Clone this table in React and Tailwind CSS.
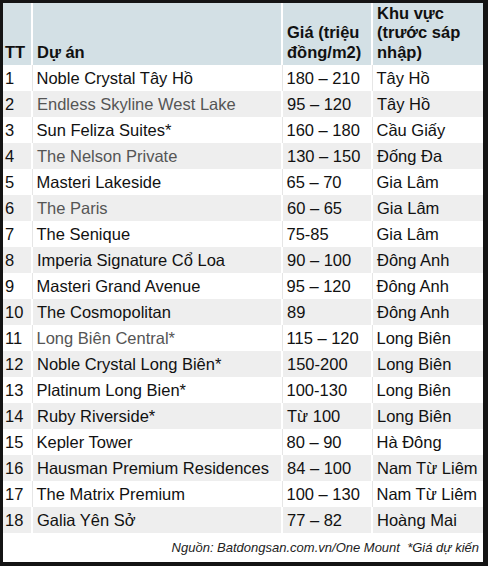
const rows = [
  ["1", "Noble Crystal Tây Hồ", "180 – 210", "Tây Hồ", false],
  ["2", "Endless Skyline West Lake", "95 – 120", "Tây Hồ", true],
  ["3", "Sun Feliza Suites*", "160 – 180", "Cầu Giấy", false],
  ["4", "The Nelson Private", "130 – 150", "Đống Đa", true],
  ["5", "Masteri Lakeside", "65 – 70", "Gia Lâm", false],
  ["6", "The Paris", "60 – 65", "Gia Lâm", true],
  ["7", "The Senique", "75-85", "Gia Lâm", false],
  ["8", "Imperia Signature Cổ Loa", "90 – 100", "Đông Anh", false],
  ["9", "Masteri Grand Avenue", "95 – 120", "Đông Anh", false],
  ["10", "The Cosmopolitan", "89", "Đông Anh", false],
  ["11", "Long Biên Central*", "115 – 120", "Long Biên", true],
  ["12", "Noble Crystal Long Biên*", "150-200", "Long Biên", false],
  ["13", "Platinum Long Bien*", "100-130", "Long Biên", false],
  ["14", "Ruby Riverside*", "Từ 100", "Long Biên", false],
  ["15", "Kepler Tower", "80 – 90", "Hà Đông", false],
  ["16", "Hausman Premium Residences", "84 – 100", "Nam Từ Liêm", false],
  ["17", "The Matrix Premium", "100 – 130", "Nam Từ Liêm", false],
  ["18", "Galia Yên Sở", "77 – 82", "Hoàng Mai", false],
];

export default function App() {
  return (
    <div className="w-[488px] h-[566px] bg-[#141414] pl-[3px] pt-[3px] pr-[5px] pb-[4px]">
      <div className="h-full bg-white flex flex-col font-['Liberation_Sans',Arial,sans-serif] text-[16.5px] text-[#111]">
        <table className="w-full border-collapse table-fixed">
          <colgroup>
            <col className="w-[29px]" />
            <col className="w-[250px]" />
            <col className="w-[90px]" />
            <col />
          </colgroup>
          <thead>
            <tr className="bg-[#d3e0e5] h-[62px] font-bold align-bottom leading-[19.5px] text-left">
              <th className="pl-[2px] pb-[3px] border-r-2 border-white">TT</th>
              <th className="pl-[4px] pb-[3px] border-r-2 border-white">Dự án</th>
              <th className="pl-[4px] pb-[3px] border-r-2 border-white">Giá (triệu đồng/m2)</th>
              <th className="pl-[4px] pb-[3px]">Khu vực (trước sáp nhập)</th>
            </tr>
          </thead>
          <tbody>
            {rows.map(([tt, name, price, area, muted], i) => {
              const line = i % 2 ? "border-white border-r-2" : "border-[#e6e6e6] border-r";
              return (
                <tr key={tt} className={`h-[26px] ${i % 2 ? "bg-[#eeeeee]" : "bg-white"}`}>
                  <td className={`pl-[2px] ${line}`}>{tt}</td>
                  <td className={`pl-[4px] whitespace-nowrap ${line} ${muted ? "text-[#555]" : ""}`}>{name}</td>
                  <td className={`pl-[4px] whitespace-nowrap ${line}`}>{price}</td>
                  <td className="pl-[4px] whitespace-nowrap">{area}</td>
                </tr>
              );
            })}
          </tbody>
        </table>
        <div className="text-right italic text-[13px] pr-[4px] pt-[5px] text-[#222]">
          Nguồn: Batdongsan.com.vn/One Mount&nbsp;&nbsp;*Giá dự kiến
        </div>
      </div>
    </div>
  );
}
